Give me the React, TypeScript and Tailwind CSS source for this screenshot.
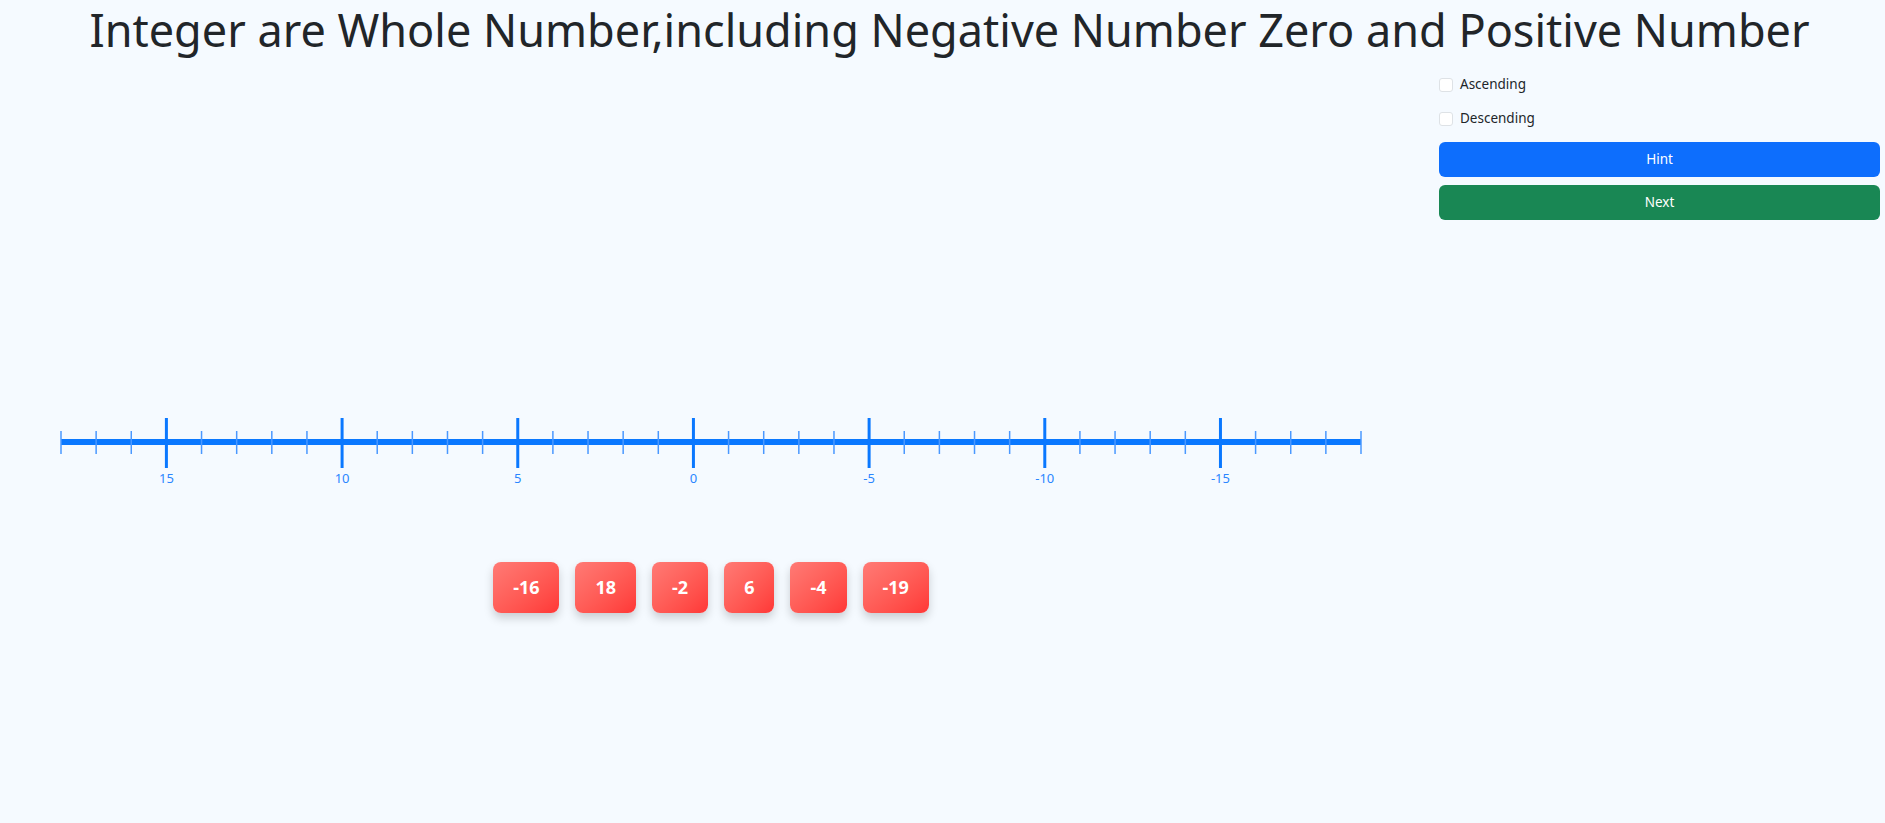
import { useState } from "react";

const values = Array.from({ length: 38 }, (_, i) => 18 - i);
const cards = [-16, 18, -2, 6, -4, -19];

const x0 = 61;
const step = 1300 / 37;

const NumberLine = () => (
  <svg width="1422" height="100" className="block">
    <line x1={x0} y1={41} x2={x0 + 37 * step} y2={41} stroke="#0a78ff" strokeWidth={6} />
    {values.map((v, i) => {
      const x = x0 + i * step;
      const major = v % 5 === 0;
      return (
        <g key={v}>
          {major ? (
            <line x1={x} y1={17} x2={x} y2={67} stroke="#0a78ff" strokeWidth={3} />
          ) : (
            <line x1={x} y1={30} x2={x} y2={53} stroke="#4a98ff" strokeWidth={1.5} />
          )}
          {major && (
            <text x={x} y={82} textAnchor="middle" fontSize={13} fill="#2a86ff" fontFamily="'Noto Sans', sans-serif">
              {v}
            </text>
          )}
        </g>
      );
    })}
  </svg>
);

export default function App() {
  const [asc, setAsc] = useState(false);
  const [desc, setDesc] = useState(false);

  return (
    <div className="min-h-screen bg-[#f5faff] text-[#212529]" style={{ fontFamily: "'Noto Sans', sans-serif" }}>
      {/* Title */}
      <h1 className="text-center text-[45px] leading-[60px] font-normal text-[#212529] pl-[14px]">
        Integer are Whole Number,including Negative Number Zero and Positive Number
      </h1>

      <div className="flex">
        {/* Main */}
        <div className="flex-1">
          <div className="pt-[341px]">
            <NumberLine />
          </div>
          <div className="flex justify-center gap-4 mt-[61px]">
            {cards.map((c) => (
              <div
                key={c}
                className="px-5 py-3 text-lg leading-[27px] font-bold text-white rounded-lg bg-gradient-to-br from-[#ff7a75] to-[#ff3636] shadow-[0_5px_10px_rgba(0,0,0,0.18)]"
              >
                {c}
              </div>
            ))}
          </div>
        </div>

        {/* Sidebar */}
        <div className="w-[463px] pl-[17px] pr-[5px] pt-[14px] text-[13.5px]">
          <label className="flex items-center gap-[7px] h-[21px] mb-[13px]">
            <input
              type="checkbox"
              checked={asc}
              onChange={() => setAsc(!asc)}
              className="appearance-none w-[14px] h-[14px] rounded-[3px] border border-[#dee2e6] bg-white"
            />
            <span>Ascending</span>
          </label>
          <label className="flex items-center gap-[7px] h-[21px] mb-[13px]">
            <input
              type="checkbox"
              checked={desc}
              onChange={() => setDesc(!desc)}
              className="appearance-none w-[14px] h-[14px] rounded-[3px] border border-[#dee2e6] bg-white"
            />
            <span>Descending</span>
          </label>
          <button className="w-full h-[35px] rounded-md bg-[#0d6efd] text-white text-[13.5px] mb-2">Hint</button>
          <button className="w-full h-[35px] rounded-md bg-[#198754] text-white text-[13.5px]">Next</button>
        </div>
      </div>
    </div>
  );
}
